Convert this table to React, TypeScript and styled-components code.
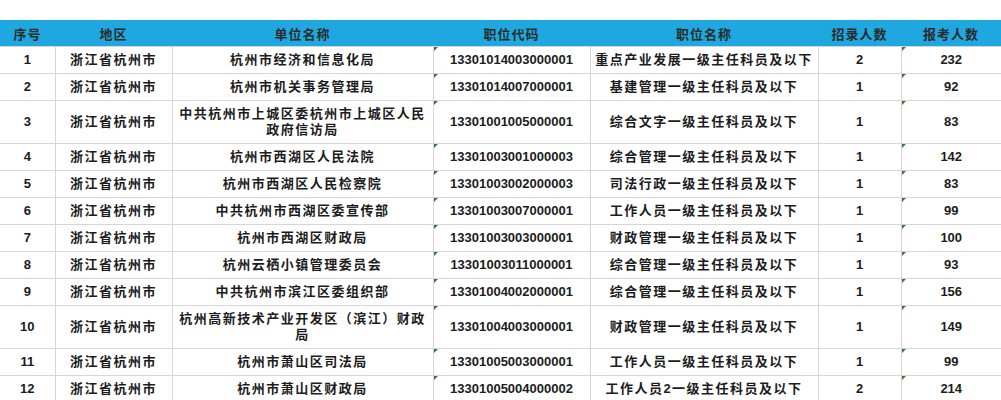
import styled, { createGlobalStyle } from "styled-components";

const GlobalStyle = createGlobalStyle`
  html, body {
    margin: 0;
    padding: 0;
    background: #fff;
  }
  body {
    font-family: "Liberation Sans", "Noto Sans CJK SC", sans-serif;
  }
`;

const Page = styled.div`
  width: 1001px;
  padding-top: 20px;
`;

const Table = styled.table`
  width: 1001px;
  border-collapse: collapse;
  table-layout: fixed;
  color: #1c1c1c;
  font-size: 13px;
  font-weight: 700;
`;

const HeadCell = styled.th`
  height: 26px;
  padding: 0;
  background: #1fa7e0;
  color: #2b2b2b;
  font-weight: 700;
  letter-spacing: 1px;
  text-align: center;
`;

const Row = styled.tr<{ $tall?: boolean }>`
  height: ${({ $tall }) => ($tall ? "43px" : "27px")};
`;

const Cell = styled.td<{ $flag?: boolean; $cjk?: boolean; $nowrap?: boolean }>`
  position: relative;
  padding: 2px 3px;
  border: 1px solid #d6d6d6;
  text-align: center;
  line-height: 16px;
  white-space: ${({ $nowrap }) => ($nowrap ? "nowrap" : "normal")};
  letter-spacing: ${({ $cjk }) => ($cjk ? "1.5px" : "0")};
  &:first-child {
    border-left: none;
  }
  &:last-child {
    border-right: none;
  }
  &::before {
    content: "";
    display: ${({ $flag }) => ($flag ? "block" : "none")};
    position: absolute;
    top: 0;
    left: 0;
    border-top: 4px solid #2e7d32;
    border-right: 4px solid transparent;
  }
`;

const columns = [
  { title: "序号", width: 55 },
  { title: "地区", width: 117 },
  { title: "单位名称", width: 261 },
  { title: "职位代码", width: 157 },
  { title: "职位名称", width: 228 },
  { title: "招录人数", width: 83 },
  { title: "报考人数", width: 100 },
];

const rows = [
  ["杭州市经济和信息化局", "13301014003000001", "重点产业发展一级主任科员及以下", "2", "232"],
  ["杭州市机关事务管理局", "13301014007000001", "基建管理一级主任科员及以下", "1", "92"],
  ["中共杭州市上城区委杭州市上城区人民政府信访局", "13301001005000001", "综合文字一级主任科员及以下", "1", "83"],
  ["杭州市西湖区人民法院", "13301003001000003", "综合管理一级主任科员及以下", "1", "142"],
  ["杭州市西湖区人民检察院", "13301003002000003", "司法行政一级主任科员及以下", "1", "83"],
  ["中共杭州市西湖区委宣传部", "13301003007000001", "工作人员一级主任科员及以下", "1", "99"],
  ["杭州市西湖区财政局", "13301003003000001", "财政管理一级主任科员及以下", "1", "100"],
  ["杭州云栖小镇管理委员会", "13301003011000001", "综合管理一级主任科员及以下", "1", "93"],
  ["中共杭州市滨江区委组织部", "13301004002000001", "综合管理一级主任科员及以下", "1", "156"],
  ["杭州高新技术产业开发区（滨江）财政局", "13301004003000001", "财政管理一级主任科员及以下", "1", "149"],
  ["杭州市萧山区司法局", "13301005003000001", "工作人员一级主任科员及以下", "1", "99"],
  ["杭州市萧山区财政局", "13301005004000002", "工作人员2一级主任科员及以下", "2", "214"],
];

export default function App() {
  return (
    <Page>
      <GlobalStyle />
      <Table>
        <colgroup>
          {columns.map((c) => (
            <col key={c.title} style={{ width: c.width }} />
          ))}
        </colgroup>
        <thead>
          <tr>
            {columns.map((c) => (
              <HeadCell key={c.title}>{c.title}</HeadCell>
            ))}
          </tr>
        </thead>
        <tbody>
          {rows.map(([unit, code, post, hire, apply], i) => (
            <Row key={code + i} $tall={unit.length > 17}>
              <Cell>{i + 1}</Cell>
              <Cell $cjk>浙江省杭州市</Cell>
              <Cell $cjk>{unit}</Cell>
              <Cell $flag>{code}</Cell>
              <Cell $cjk $nowrap>{post}</Cell>
              <Cell>{hire}</Cell>
              <Cell $flag>{apply}</Cell>
            </Row>
          ))}
        </tbody>
      </Table>
    </Page>
  );
}
